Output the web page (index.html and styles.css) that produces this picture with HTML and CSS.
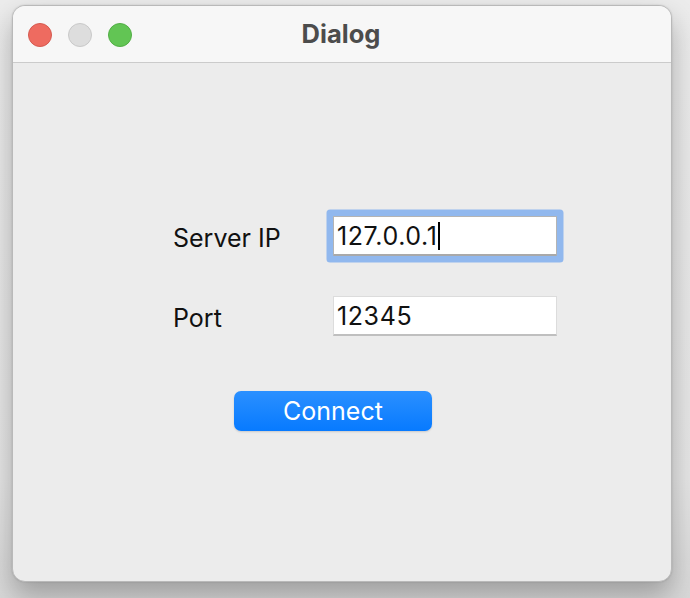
FILE: index.html
```html
<!DOCTYPE html>
<html>
<head>
<meta charset="utf-8">
<link rel="stylesheet" href="styles.css">
</head>
<body>
<div class="window">
  <div class="titlebar">
    <div class="lights">
      <span class="light red"></span>
      <span class="light gray"></span>
      <span class="light green"></span>
    </div>
    <div class="title">Dialog</div>
  </div>
  <div class="content">
    <div class="row">
      <div class="label">Server IP</div>
      <div class="field focused">127.0.0.1<span class="caret"></span></div>
    </div>
    <div class="row">
      <div class="label">Port</div>
      <div class="field">12345</div>
    </div>
    <div class="button">Connect</div>
  </div>
</div>
</body>
</html>
```
FILE: styles.css
```css
html, body {
  margin: 0;
  height: 100%;
}
body {
  background: linear-gradient(#ececec 0%, #e6e6e6 80%, #d8d8d8 100%);
  padding: 5px 18px 0 12px;
  box-sizing: border-box;
  font-family: Inter, "Liberation Sans", sans-serif;
  overflow: hidden;
}
.window {
  width: 660px;
  height: 577px;
  box-sizing: border-box;
  background: #ececec;
  border: 1px solid #b9b9b9;
  border-radius: 13px;
  overflow: hidden;
  box-shadow: 0 14px 28px rgba(0, 0, 0, 0.28), 0 0 2px rgba(0, 0, 0, 0.15);
}
.titlebar {
  height: 56px;
  background: #f7f7f7;
  border-bottom: 1px solid #cbcbcb;
  display: flex;
  align-items: center;
  position: relative;
}
.lights {
  display: flex;
  gap: 16px;
  padding-left: 15px;
  padding-top: 1px;
}
.light {
  width: 24px;
  height: 24px;
  border-radius: 50%;
  box-sizing: border-box;
}
.red { background: #ee6b60; border: 1px solid #d55a50; }
.gray { background: #dddddd; border: 1px solid #c9c9c9; }
.green { background: #62c554; border: 1px solid #52ae45; }
.title {
  position: absolute;
  left: 0;
  right: 0;
  top: 0;
  bottom: 0;
  display: flex;
  align-items: center;
  justify-content: center;
  font-weight: 700;
  font-size: 25.5px;
  color: #4c4c4c;
  padding-right: 2px;
  padding-bottom: 2px;
}
.content {
  padding: 153px 0 0 160px;
}
.row {
  display: flex;
  align-items: center;
  height: 40px;
  margin-bottom: 40px;
}
.label {
  width: 160px;
  font-size: 25px;
  color: #111;
  padding-top: 4px;
}
.field {
  width: 224px;
  height: 40px;
  box-sizing: border-box;
  background: #fff;
  border: 1px solid #dcdcdc;
  border-bottom: 2px solid #bfbfbf;
  font-size: 25px;
  letter-spacing: 0.6px;
  color: #111;
  padding: 1px 0 0 3px;
  display: flex;
  align-items: center;
}
.field.focused {
  border-color: #b4b4b4;
  border-width: 1px;
  border-bottom: 2px solid #a9a9a9;
  border-radius: 1px;
  box-shadow: 0 0 0 6.5px #91b8ee;
}
.caret {
  display: inline-block;
  width: 2px;
  height: 28px;
  background: #000;
  margin-left: 1px;
}
.button {
  margin: 55px 0 0 61px;
  width: 198px;
  height: 40px;
  border-radius: 7px;
  background: linear-gradient(#2b90ff, #077aff);
  color: #fff;
  font-size: 25px;
  display: flex;
  align-items: center;
  justify-content: center;
  box-shadow: 0 1px 2px rgba(0, 0, 0, 0.15);
}
```
